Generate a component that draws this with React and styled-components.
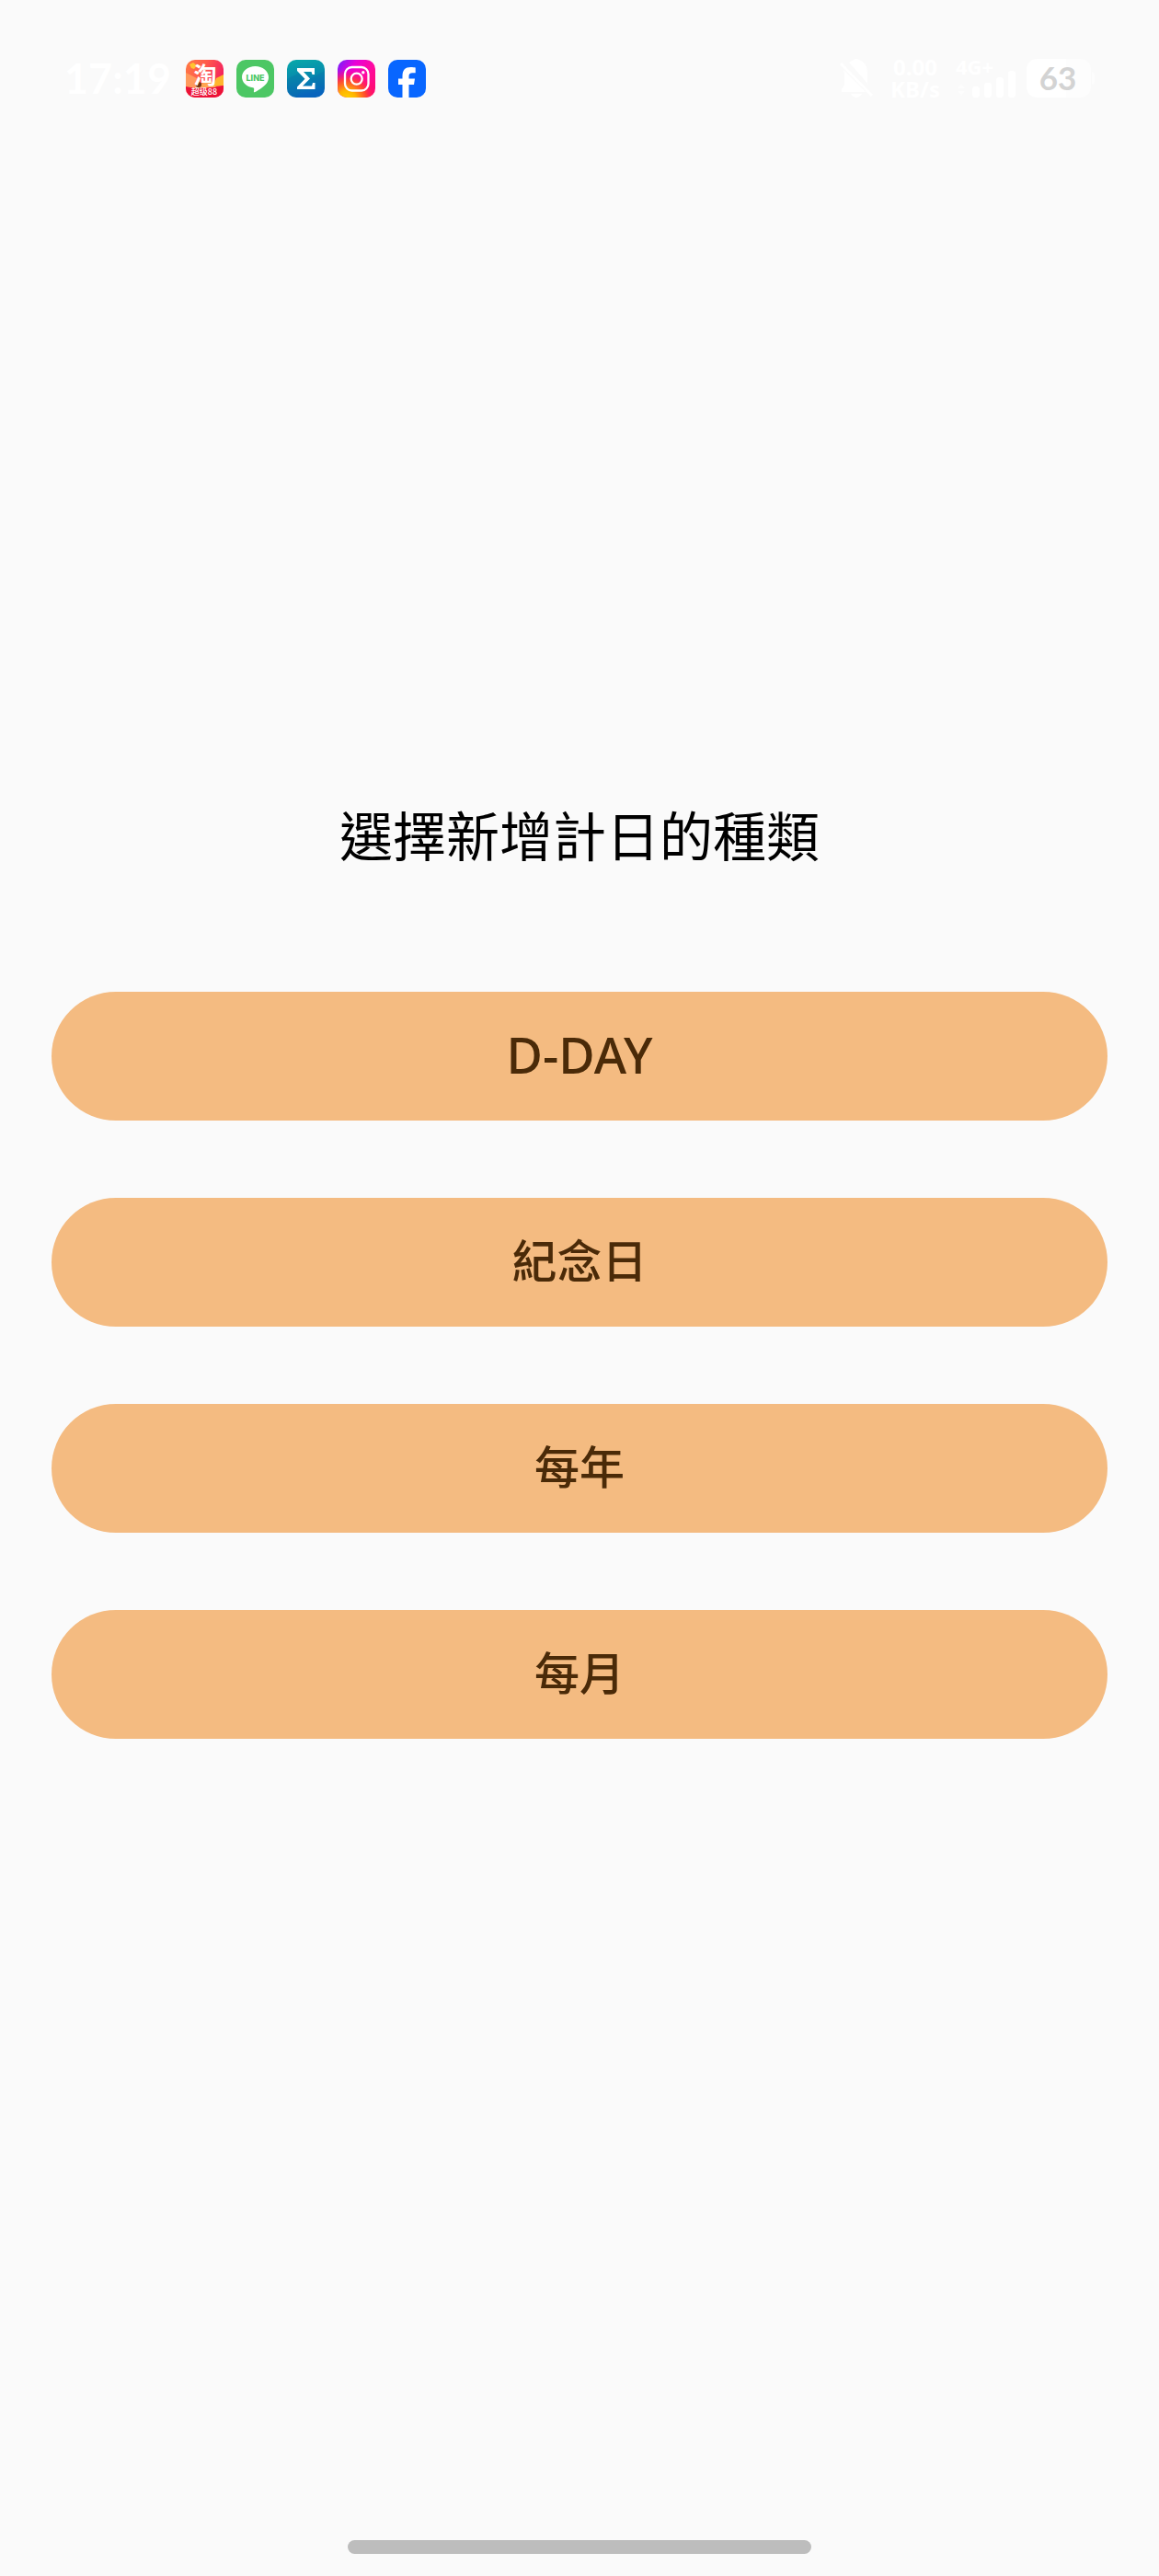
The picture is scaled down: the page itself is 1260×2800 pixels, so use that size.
import React from "react";
import styled, { createGlobalStyle } from "styled-components";

const GlobalStyle = createGlobalStyle`
  *, *::before, *::after { box-sizing: border-box; }
  body {
    margin: 0;
    background: #fafafa;
    font-family: "Noto Sans", "Noto Sans CJK TC", sans-serif;
  }
`;

const Screen = styled.div`
  display: flex;
  flex-direction: column;
  min-height: 100vh;
`;

const StatusBar = styled.header`
  display: flex;
  align-items: center;
  justify-content: space-between;
  height: 170px;
  padding: 0 70px;
  color: #ffffff;
`;

const StatusGroup = styled.div`
  display: flex;
  align-items: center;
  gap: ${(p) => p.$gap}px;
`;

const Clock = styled.time`
  width: 118px;
  font: 700 45px/56px Lato, sans-serif;
`;

const AppIcon = styled.svg`
  display: block;
  width: 41px;
  height: 41px;
`;

const Glyph = styled.svg`
  display: block;
  flex: none;
  overflow: visible;
`;

const Speed = styled.div`
  display: flex;
  flex-direction: column;
  align-items: center;
  width: 54px;
  font-weight: 700;
  font-size: 24px;
  line-height: 24px;
`;

const Main = styled.main`
  flex: 1;
  display: flex;
  flex-direction: column;
  justify-content: center;
  gap: 130px;
  padding: 0 56px 177px;
`;

const Title = styled.h1`
  margin: 0;
  font-family: "Noto Sans CJK TC", sans-serif;
  font-weight: 400;
  font-size: 58px;
  line-height: 84px;
  text-align: center;
  color: #000000;
`;

const Choices = styled.div`
  display: flex;
  flex-direction: column;
  gap: 84px;
`;

const Choice = styled.button`
  height: 140px;
  padding: 0 84px 4px;
  border: 0;
  border-radius: 70px;
  background: #f4bb81;
  color: #4a2a08;
  font-family: "Noto Sans", "Noto Sans CJK TC", sans-serif;
  font-weight: 500;
  font-size: ${(p) => (p.$latin ? 54 : 49)}px;
  line-height: 70px;
  cursor: pointer;
`;

const Footer = styled.footer`
  display: flex;
  justify-content: center;
  padding-bottom: 24px;
`;

const HomeBar = styled.div`
  width: 40%;
  height: 15px;
  border-radius: 8px;
  background: #bdbdbd;
`;

const choices = [
  { label: "D-DAY", latin: true },
  { label: "紀念日" },
  { label: "每年" },
  { label: "每月" },
];

function TaobaoIcon() {
  return (
    <AppIcon viewBox="0 0 41 41">
      <defs>
        <linearGradient id="tb" x1="0" y1="0" x2="1" y2="0.4">
          <stop offset="0" stopColor="#ff7a45" />
          <stop offset="0.5" stopColor="#ff5a4c" />
          <stop offset="1" stopColor="#f3205f" />
        </linearGradient>
        <clipPath id="tbClip"><rect width="41" height="41" rx="10" /></clipPath>
      </defs>
      <g clipPath="url(#tbClip)">
        <rect width="41" height="41" fill="url(#tb)" />
        <path d="M0 14 12 20 16 31H0Z" fill="#ff9a5c" />
        <path d="M4 5 8 3 12 6 9 10 6 9Z" fill="#ffc530" />
        <path d="M33 20 41 16V28L30 29Z" fill="#ffb52e" />
        <path d="M15 26 28 23 33 30H14Z" fill="#ffa552" />
        <circle cx="14" cy="27" r="3" fill="#6b3218" />
        <path d="M0 29Q20 34 41 28V41H0Z" fill="#ec1238" />
      </g>
      <text x="21" y="26" textAnchor="middle" fontFamily="Noto Sans CJK SC" fontWeight="700" fontSize="25" fill="#fff">淘</text>
      <text x="20" y="38" textAnchor="middle" fontFamily="Noto Sans CJK SC" fontWeight="500" fontSize="9" fill="#fff">超级88</text>
    </AppIcon>
  );
}

function LineIcon() {
  return (
    <AppIcon viewBox="0 0 41 41">
      <rect width="41" height="41" rx="10" fill="#4cc764" />
      <path d="M20.500 7C12.500 7 6 12.200 6 18.800c0 5.800 5.100 10.600 12 11.500 1.800.4 1.200 1.800.9 4.500.2.700.7.700 1.400.3 4.500-2.300 9.800-6 12.400-9.300 1.500-1.900 2.300-4.300 2.300-7C35 12.200 28.500 7 20.500 7Z" fill="#fff" />
      <text x="20.500" y="22.500" textAnchor="middle" fontFamily="Inter" fontWeight="800" fontSize="9" fill="#4cc764">LINE</text>
    </AppIcon>
  );
}

function SigmaIcon() {
  return (
    <AppIcon viewBox="0 0 41 41">
      <defs>
        <linearGradient id="sg" x1="0" y1="0" x2="0.2" y2="1">
          <stop offset="0" stopColor="#08aaa9" />
          <stop offset="0.5" stopColor="#078bad" />
          <stop offset="1" stopColor="#0764bd" />
        </linearGradient>
        <clipPath id="sgClip"><rect width="41" height="41" rx="10" /></clipPath>
      </defs>
      <g clipPath="url(#sgClip)">
        <rect width="41" height="41" fill="url(#sg)" />
        <path d="M0 21 12 15 24 21 10 41H0Z" fill="#0873a6" opacity=".35" />
        <path d="M41 12 25 21 41 33Z" fill="#0768a8" opacity=".25" />
        <path d="M11 9H30V16H27.500L26.500 13H18L25 20.500 17 28.500H27L28 25H30.500V32H11V29.500L19.500 20.800 11 12Z" fill="#fff" />
      </g>
    </AppIcon>
  );
}

function InstagramIcon() {
  return (
    <AppIcon viewBox="0 0 41 41">
      <defs>
        <linearGradient id="igBase" x1="0" y1="0" x2="1" y2="0.7">
          <stop offset="0" stopColor="#6a22ff" />
          <stop offset="0.35" stopColor="#e800d9" />
          <stop offset="0.7" stopColor="#ff0aa0" />
          <stop offset="1" stopColor="#ff0c78" />
        </linearGradient>
        <radialGradient id="igWarm" cx="0.25" cy="1.05" r="0.8">
          <stop offset="0" stopColor="#ffd500" />
          <stop offset="0.3" stopColor="#ffb400" />
          <stop offset="0.65" stopColor="#ff4a28" stopOpacity="0.9" />
          <stop offset="1" stopColor="#ff0069" stopOpacity="0" />
        </radialGradient>
      </defs>
      <rect width="41" height="41" rx="10" fill="url(#igBase)" />
      <rect width="41" height="41" rx="10" fill="url(#igWarm)" />
      <rect x="8" y="8" width="25.500" height="25.500" rx="7.500" fill="none" stroke="#fff" strokeWidth="2.300" />
      <circle cx="20.700" cy="20.700" r="6" fill="none" stroke="#fff" strokeWidth="2.300" />
      <circle cx="27.800" cy="13.700" r="1.700" fill="#fff" />
    </AppIcon>
  );
}

function FacebookIcon() {
  return (
    <AppIcon viewBox="0 0 41 41">
      <rect width="41" height="41" rx="10" fill="#0866ff" />
      <path d="M15.500 41V27H11V20.500H15.500V17.500C15.500 11 18.500 8 24.500 8 26.500 8 28.500 8.200 29.700 8.600V14.300H26.500C23.500 14.300 22.500 15.500 22.500 18V20.500H29L28 27H22.500V41Z" fill="#fff" />
    </AppIcon>
  );
}

function MutedBell() {
  return (
    <Glyph width="44" height="42" viewBox="0 0 44 42" fill="currentColor">
      <path d="M11 4Q14 2 16 1Q19-1 22 1Q31 4 31 15V26L34 30ZM5 12 29 36H3V33L6 28V16ZM13 38H25Q23 42 19 42 15 42 13 38Z" />
      <path d="M2 5 36 40" stroke="currentColor" strokeWidth="3" />
    </Glyph>
  );
}

function Signal() {
  return (
    <Glyph width="70" height="42" viewBox="0 0 70 42" fill="currentColor">
      <text x="5" y="17" fontFamily="Noto Sans" fontWeight="700" fontSize="22">4G+</text>
      <path d="M7 32 11 27 15 32ZM7 35H15L11 40Z" opacity=".5" />
      <rect x="23" y="30" width="8" height="12" rx="3" />
      <rect x="36" y="26" width="8" height="16" rx="3" />
      <rect x="49" y="20" width="8" height="22" rx="3" />
      <rect x="62" y="13" width="8" height="29" rx="3" />
    </Glyph>
  );
}

function Battery() {
  return (
    <Glyph width="74" height="42" viewBox="0 0 74 42">
      <path d="M43 0H57Q70 0 70 13V29Q70 42 57 42H43Z" fill="#fdfdfd" />
      <path d="M43 0H13Q0 0 0 13V29Q0 42 13 42H43Z" fill="#fff" />
      <path d="M71 14Q74 15 74 18V24Q74 27 71 28Z" fill="#fdfdfd" />
      <text x="34" y="34" textAnchor="middle" fontFamily="Lato" fontWeight="700" fontSize="35" fill="#d3d3d3">63</text>
    </Glyph>
  );
}

export default function App() {
  return (
    <Screen>
      <GlobalStyle />
      <StatusBar>
        <StatusGroup $gap={14}>
          <Clock>17:19</Clock>
          <TaobaoIcon />
          <LineIcon />
          <SigmaIcon />
          <InstagramIcon />
          <FacebookIcon />
        </StatusGroup>
        <StatusGroup $gap={12}>
          <MutedBell />
          <Speed>
            <span>0.00</span>
            <span>KB/s</span>
          </Speed>
          <Signal />
          <Battery />
        </StatusGroup>
      </StatusBar>
      <Main>
        <Title>選擇新增計日的種類</Title>
        <Choices>
          {choices.map((c) => (
            <Choice key={c.label} type="button" $latin={c.latin}>
              {c.label}
            </Choice>
          ))}
        </Choices>
      </Main>
      <Footer>
        <HomeBar />
      </Footer>
    </Screen>
  );
}
